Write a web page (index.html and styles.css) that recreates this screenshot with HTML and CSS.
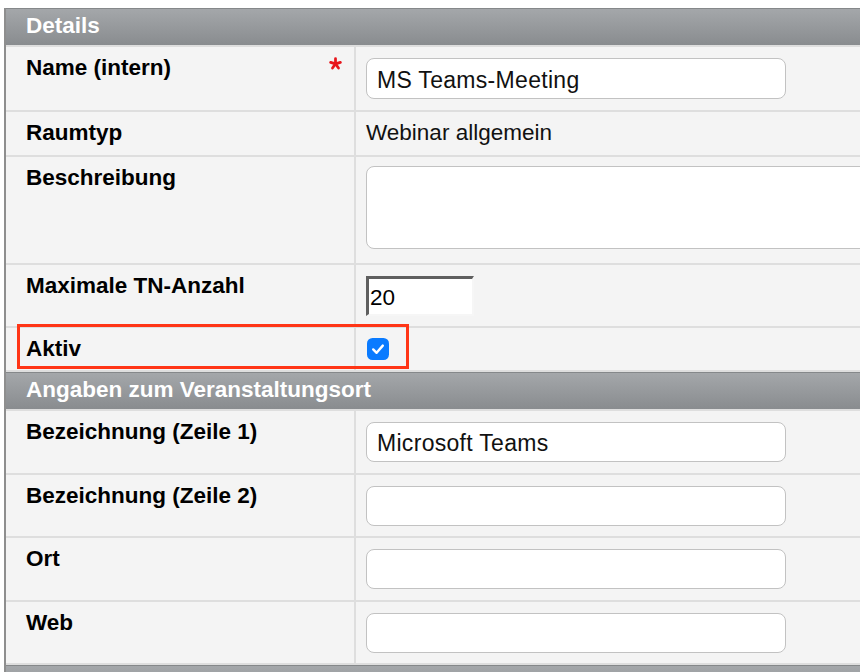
FILE: index.html
```html
<!DOCTYPE html>
<html lang="de">
<head>
<meta charset="utf-8">
<title>Details</title>
<link rel="stylesheet" href="styles.css">
</head>
<body>
<div class="form">
  <div class="section-head">Details</div>
  <div class="row">
    <div class="label"><span>Name (intern)</span><svg class="req" viewBox="0 0 16 16" width="13" height="13"><g stroke="#e8161c" stroke-width="3.4" stroke-linecap="round"><line x1="8" y1="8.5" x2="8" y2="2"/><line x1="8" y1="8.5" x2="14" y2="6.6"/><line x1="8" y1="8.5" x2="11.7" y2="13.6"/><line x1="8" y1="8.5" x2="4.3" y2="13.6"/><line x1="8" y1="8.5" x2="2" y2="6.6"/></g></svg></div>
    <div class="value"><input class="field" type="text" value="MS Teams-Meeting"></div>
  </div>
  <div class="row">
    <div class="label"><span>Raumtyp</span></div>
    <div class="value text">Webinar allgemein</div>
  </div>
  <div class="row">
    <div class="label"><span>Beschreibung</span></div>
    <div class="value area"><textarea class="field textarea"></textarea></div>
  </div>
  <div class="row">
    <div class="label"><span>Maximale TN-Anzahl</span></div>
    <div class="value num"><input class="number" type="text" value="20"></div>
  </div>
  <div class="row aktiv">
    <div class="label"><span>Aktiv</span></div>
    <div class="value check">
      <span class="checkbox"><svg viewBox="0 0 22 22" width="22" height="22"><rect x="0" y="0" width="22" height="22" rx="5.5" fill="#0a7bff"/><path d="M6.2 11.4 L9.6 14.8 L15.8 7.6" fill="none" stroke="#fff" stroke-width="2.4" stroke-linecap="round" stroke-linejoin="round"/></svg></span>
    </div>
    <div class="highlight"></div>
  </div>
  <div class="section-head">Angaben zum Veranstaltungsort</div>
  <div class="row loc">
    <div class="label"><span>Bezeichnung (Zeile 1)</span></div>
    <div class="value"><input class="field" type="text" value="Microsoft Teams"></div>
  </div>
  <div class="row loc">
    <div class="label"><span>Bezeichnung (Zeile 2)</span></div>
    <div class="value"><input class="field" type="text" value=""></div>
  </div>
  <div class="row loc">
    <div class="label"><span>Ort</span></div>
    <div class="value"><input class="field" type="text" value=""></div>
  </div>
  <div class="row loc">
    <div class="label"><span>Web</span></div>
    <div class="value"><input class="field" type="text" value=""></div>
  </div>
  <div class="section-head empty"></div>
</div>
</body>
</html>
```
FILE: styles.css
```css
html, body {
  margin: 0;
  padding: 0;
  background: #fff;
  overflow: hidden;
}

body {
  font-family: "Liberation Sans", Arial, Helvetica, sans-serif;
  font-size: 22.5px;
  color: #000;
}

.form {
  margin: 8px 0 0 4px;
  width: 1000px;
  border-left: 2px solid #8e8e8e;
}

.section-head {
  background: linear-gradient(#a4a7aa, #898c8f);
  border-top: 1px solid #85888a;
  border-bottom: 2px solid #dedede;
  color: #fff;
  font-weight: bold;
  line-height: 26px;
  padding: 4px 20px 6px;
}

.section-head.empty {
  height: 26px;
}

.row {
  display: flex;
  background: #f4f4f4;
  border-bottom: 2px solid #dedede;
}

.label {
  box-sizing: border-box;
  width: 350px;
  flex: none;
  border-right: 2px solid #dedede;
  padding: 8px 12px 0 20px;
  font-weight: bold;
  line-height: 26px;
  display: flex;
  justify-content: space-between;
  align-items: flex-start;
}

.req {
  margin-top: 2px;
}

.value {
  flex: 1;
  padding: 11px 10px;
}

.value.text {
  padding: 8px 10px 9px;
  line-height: 26px;
  color: #111;
}

.value.area {
  padding: 9px 10px 14px;
}

.value.num {
  padding: 11px 10px 10px;
}

.value.check {
  padding: 10px 10px;
  line-height: 0;
}

.row.loc .value {
  padding: 11px 10px 10.5px;
}

.row.loc .field {
  height: 40px;
}

.field {
  display: block;
  box-sizing: border-box;
  width: 420px;
  height: 41px;
  margin: 0;
  border: 1px solid #c2c2c2;
  border-radius: 8px;
  background: #fff;
  padding: 3px 10px 0;
  font-family: "Liberation Sans", Arial, Helvetica, sans-serif;
  font-size: 23px;
  letter-spacing: 0.3px;
  color: #111;
  outline: none;
}

.textarea {
  width: 620px;
  height: 83px;
  resize: none;
}

.number {
  display: block;
  box-sizing: border-box;
  width: 108px;
  height: 40px;
  margin: 0;
  padding: 2px 1px 0;
  border-style: solid;
  border-width: 3px 2px 2px 3px;
  border-color: #5f5f5f #f6f6f6 #f6f6f6 #5f5f5f;
  background: #fff;
  font-family: "Liberation Sans", Arial, Helvetica, sans-serif;
  font-size: 22.5px;
  color: #000;
  outline: none;
}

.checkbox {
  display: inline-block;
  width: 22px;
  height: 22px;
  margin-left: 1px;
}

.row.aktiv {
  position: relative;
}

.highlight {
  position: absolute;
  left: 11px;
  top: -4px;
  width: 392px;
  height: 45px;
  box-sizing: border-box;
  border: 3px solid #ff3516;
  pointer-events: none;
}
```
